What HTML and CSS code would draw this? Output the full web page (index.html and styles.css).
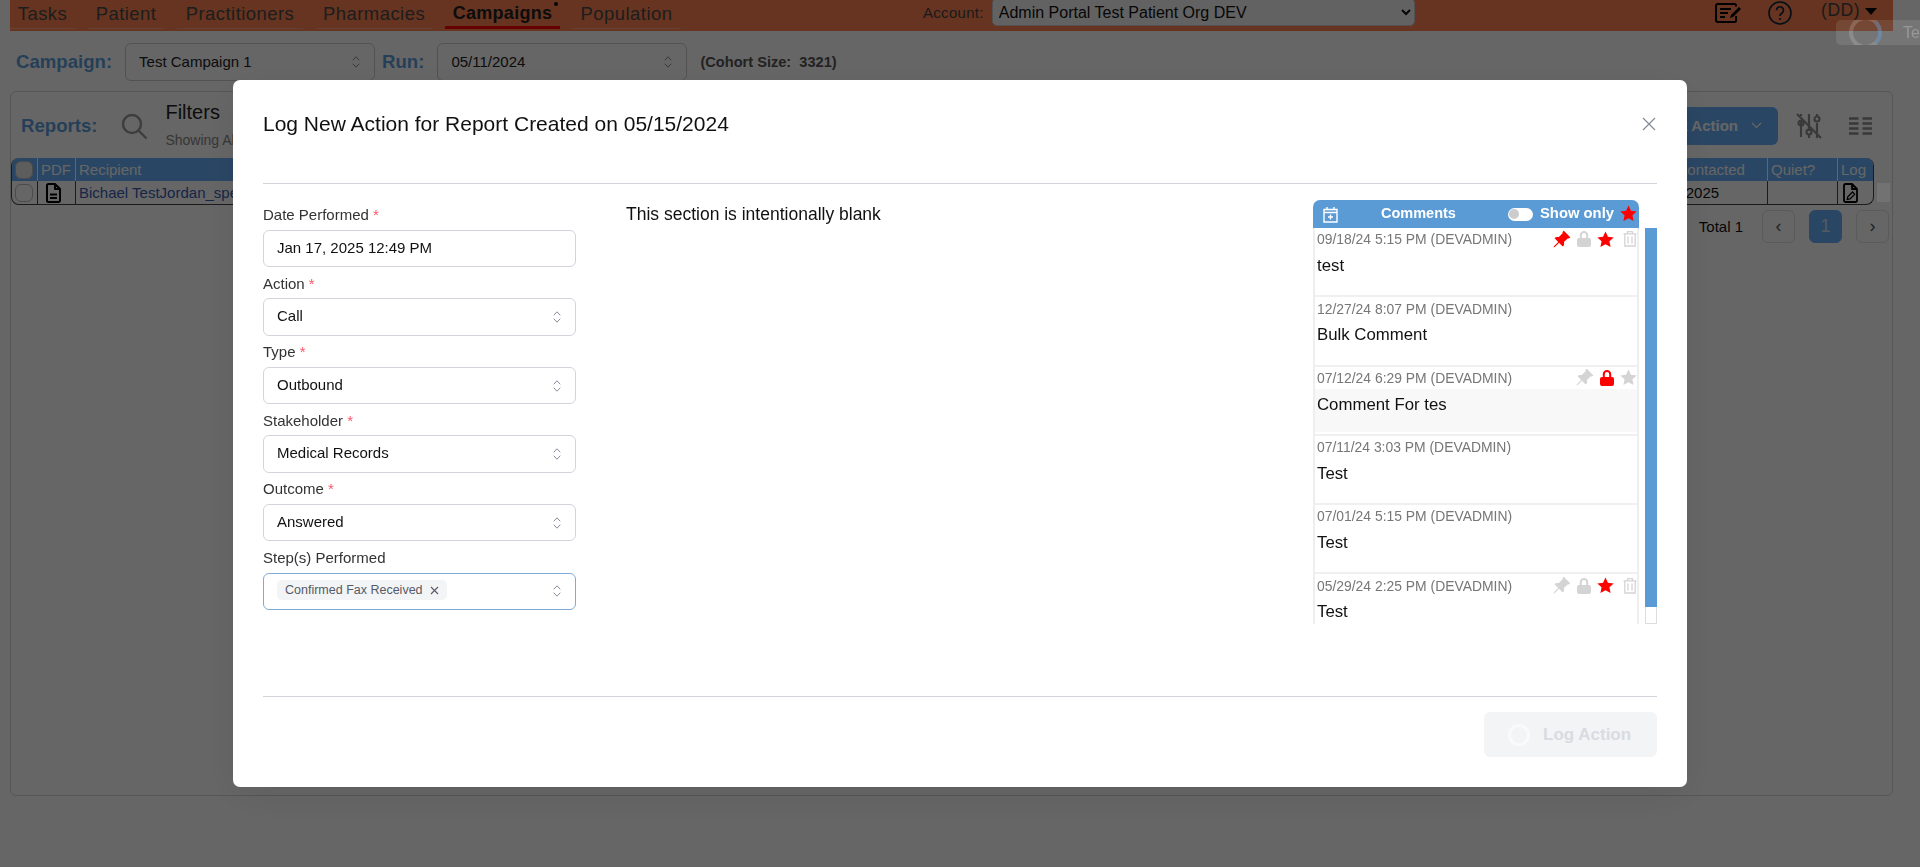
FILE: index.html
```html
<!DOCTYPE html>
<html lang="en">
<head>
<meta charset="utf-8">
<title>Log New Action</title>
<link rel="stylesheet" href="styles.css">
</head>
<body>
<svg class="defs" width="0" height="0" aria-hidden="true">
  <symbol id="i-pin" viewBox="0 0 16 16"><path d="M9.828.722a.5.5 0 0 1 .354.146l4.95 4.95a.5.5 0 0 1 0 .707c-.48.48-1.072.588-1.503.588-.177 0-.335-.018-.46-.039l-3.134 3.134a5.927 5.927 0 0 1 .16 1.013c.046.702-.032 1.687-.72 2.375a.5.5 0 0 1-.707 0l-2.829-2.828-3.182 3.182c-.195.195-1.219.902-1.414.707-.195-.195.512-1.22.707-1.414l3.182-3.182-2.828-2.829a.5.5 0 0 1 0-.707c.688-.688 1.673-.767 2.375-.72a5.922 5.922 0 0 1 1.013.16l3.134-3.133a2.772 2.772 0 0 1-.04-.461c0-.43.108-1.022.589-1.503a.5.5 0 0 1 .353-.146z" fill="currentColor"/></symbol>
  <symbol id="i-lock" viewBox="0 0 14 16"><path d="M7 0a4.200 4.200 0 0 0-4.200 4.200V7H2a2 2 0 0 0-2 2v5a2 2 0 0 0 2 2h10a2 2 0 0 0 2-2V9a2 2 0 0 0-2-2h-.8V4.200A4.200 4.200 0 0 0 7 0zm0 2a2.200 2.200 0 0 1 2.200 2.200V7H4.800V4.200A2.200 2.200 0 0 1 7 2z" fill="currentColor"/></symbol>
  <symbol id="i-star" viewBox="0 0 16 16"><path d="M8 .4l2.300 5 5.400.6-4 3.700 1.100 5.400L8 12.400l-4.800 2.700 1.100-5.400-4-3.700 5.400-.6z" fill="currentColor"/></symbol>
  <symbol id="i-trash" viewBox="0 0 14 16"><path d="M.5 2.800h13M4.500 2.800V1a.5.5 0 0 1 .5-.5h4a.5.5 0 0 1 .5.5v1.800M1.800 2.800v12.200h10.400V2.800M5 5.500v7M9 5.500v7" fill="none" stroke="currentColor" stroke-width="1.300"/></symbol>
  <symbol id="i-updown" viewBox="0 0 8 14"><path d="M1 5l3-3.200L7 5M1 9l3 3.200L7 9" fill="none" stroke="currentColor" stroke-width="1" stroke-linecap="round"/></symbol>
  <symbol id="i-doc" viewBox="0 0 15 20"><path d="M2.500 1h6.500l5 5v11.500a1.500 1.500 0 0 1-1.500 1.500h-10A1.500 1.500 0 0 1 1 17.500v-15A1.500 1.500 0 0 1 2.500 1zM9 1v5h5" fill="none" stroke="currentColor" stroke-width="2" stroke-linejoin="round"/><path d="M4 11.500h7M4 15h7" stroke="currentColor" stroke-width="1.800"/></symbol>
  <symbol id="i-log" viewBox="0 0 15 20"><path d="M2.500 1h6.500l5 5v11.500a1.500 1.500 0 0 1-1.500 1.500h-10A1.500 1.500 0 0 1 1 17.500v-15A1.500 1.500 0 0 1 2.500 1zM9 1v5h5" fill="none" stroke="currentColor" stroke-width="1.800" stroke-linejoin="round"/><path d="M4.200 16.500l.6-2.800 4.700-4.700 2.200 2.200-4.700 4.700z" fill="none" stroke="currentColor" stroke-width="1.300"/></symbol>
</svg>

<div class="page">
  <nav class="nav">
    <ul class="tabs">
      <li class="tab tab-1">Tasks</li>
      <li class="tab tab-2">Patient</li>
      <li class="tab tab-3">Practitioners</li>
      <li class="tab tab-4">Pharmacies</li>
      <li class="tab tab-5 tab-active">Campaigns<span class="dot"></span></li>
      <li class="tab tab-6">Population</li>
    </ul>
    <div class="account">
      <label class="account-label" for="acct">Account:</label>
      <select class="account-select" id="acct"><option>Admin Portal Test Patient Org DEV</option></select>
    </div>
    <div class="nav-right">
      <svg class="nav-edit" width="27" height="20" viewBox="0 0 27 20"><path d="M21 3.500V2.500A1.500 1.500 0 0 0 19.500 1H3A2 2 0 0 0 1 3v14a2 2 0 0 0 2 2h16.500a1.500 1.500 0 0 0 1.500-1.500V13" fill="none" stroke="currentColor" stroke-width="2"/><path d="M5 6h11M5 10h8M5 14h5" stroke="currentColor" stroke-width="2"/><path d="M15 15l1-3 8-8 2 2-8 8z" fill="currentColor"/></svg>
      <svg class="nav-help" width="24" height="24" viewBox="0 0 24 24"><circle cx="12" cy="12" r="11" fill="none" stroke="currentColor" stroke-width="1.600"/><path d="M8.500 9.300a3.500 3.500 0 1 1 5.300 3c-1.200.8-1.800 1.300-1.800 2.700" fill="none" stroke="currentColor" stroke-width="1.700"/><circle cx="12" cy="18" r="1.100" fill="currentColor"/></svg>
      <span class="user">(DD)</span>
      <span class="caret"></span>
    </div>
  </nav>

  <div class="subbar">
    <span class="sub-label lab-campaign">Campaign:</span>
    <div class="fake-select">Test Campaign 1<svg class="updown" width="8" height="14"><use href="#i-updown"/></svg></div>
    <span class="sub-label lab-run">Run:</span>
    <div class="fake-select">05/11/2024<svg class="updown" width="8" height="14"><use href="#i-updown"/></svg></div>
    <span class="cohort">(Cohort Size:&nbsp; 3321)</span>
  </div>

  <section class="panel">
    <div class="toolbar">
      <span class="sub-label reports">Reports:</span>
      <div class="search-box">
        <svg width="28" height="28" viewBox="0 0 28 28"><circle cx="12" cy="12" r="9" fill="none" stroke="currentColor" stroke-width="2.400"/><path d="M18.500 18.500l8 8" stroke="currentColor" stroke-width="2.400"/></svg>
      </div>
      <div class="filter-text">
        <div class="filter-title">Filters</div>
        <div class="filter-sub">Showing All Reports</div>
      </div>
      <div class="toolbar-right">
        <div class="action-btn">Bulk Action
          <svg width="11" height="7" viewBox="0 0 11 7"><path d="M1 1l4.500 4.500L10 1" fill="none" stroke="currentColor" stroke-width="1.200"/></svg>
        </div>
        <svg class="tool-sliders" width="26" height="26" viewBox="0 0 26 26"><g fill="none" stroke="currentColor" stroke-width="2.200"><path d="M5 8V24M5 1v2M13 1v17M13 22v3M21 10v15M21 1v3"/><circle cx="5" cy="10" r="2.500"/><circle cx="13" cy="19" r="2.500"/><circle cx="21" cy="6" r="2.500"/><path d="M1 1l24 24"/></g></svg>
        <svg class="tool-cols" width="23" height="18" viewBox="0 0 23 18"><path d="M0 1.500h9.500M13.500 1.500H23M0 6.500h9.500M13.500 6.500H23M0 11.500h9.500M13.500 11.500H23M0 16.500h9.500M13.500 16.500H23" stroke="currentColor" stroke-width="2.400"/></svg>
      </div>
    </div>

    <div class="table-wrap">
      <div class="table">
        <div class="thead">
          <div class="cell c-check"><span class="check check-head"></span></div>
          <div class="cell c-pdf">PDF</div>
          <div class="cell c-name">Recipient</div>
          <div class="cell c-last">Last Contacted</div>
          <div class="cell c-quiet">Quiet?</div>
          <div class="cell c-log">Log</div>
        </div>
        <div class="trow">
          <div class="cell c-check"><span class="check"></span></div>
          <div class="cell c-pdf icon-cell pdf-cell"><svg width="15" height="20"><use href="#i-doc"/></svg></div>
          <div class="cell c-name link">Bichael TestJordan_specialist</div>
          <div class="cell c-last">01/17/2025</div>
          <div class="cell c-quiet"></div>
          <div class="cell c-log icon-cell log-cell"><svg width="15" height="20"><use href="#i-log"/></svg></div>
        </div>
      </div>
      <div class="table-scroll"></div>
    </div>

    <div class="pager">
      <span class="total">Total 1</span>
      <span class="page-btn">&#8249;</span>
      <span class="page-btn page-current">1</span>
      <span class="page-btn">&#8250;</span>
    </div>
  </section>
</div>

<div class="overlay"></div>

<div class="ghost-toast"><span class="ghost-spin"></span><span class="ghost-text">Te</span></div>

<div class="modal" role="dialog">
  <header class="modal-head">
    <h2 class="modal-title">Log New Action for Report Created on 05/15/2024</h2>
    <svg class="close" width="14" height="14" viewBox="0 0 14 14"><path d="M1 1l12 12M13 1L1 13" stroke="currentColor" stroke-width="1.300"/></svg>
  </header>

  <div class="modal-body">
    <form class="form">
      <div class="field"><label class="label">Date Performed <b class="req">*</b></label><div class="control">Jan 17, 2025 12:49 PM</div></div>
      <div class="field"><label class="label">Action <b class="req">*</b></label><div class="control">Call<svg class="updown" width="8" height="14"><use href="#i-updown"/></svg></div></div>
      <div class="field"><label class="label">Type <b class="req">*</b></label><div class="control">Outbound<svg class="updown" width="8" height="14"><use href="#i-updown"/></svg></div></div>
      <div class="field"><label class="label">Stakeholder <b class="req">*</b></label><div class="control">Medical Records<svg class="updown" width="8" height="14"><use href="#i-updown"/></svg></div></div>
      <div class="field"><label class="label">Outcome <b class="req">*</b></label><div class="control">Answered<svg class="updown" width="8" height="14"><use href="#i-updown"/></svg></div></div>
      <div class="field"><label class="label">Step(s) Performed</label><div class="control control-focus"><span class="chip">Confirmed Fax Received<svg width="9" height="9" viewBox="0 0 9 9"><path d="M1 1l7 7M8 1L1 8" stroke="currentColor" stroke-width="1.100"/></svg></span><svg class="updown" width="8" height="14"><use href="#i-updown"/></svg></div></div>
    </form>

    <p class="blank">This section is intentionally blank</p>

    <aside class="comments">
      <div class="c-head">
        <svg class="c-cal" width="15" height="17" viewBox="0 0 15 17"><path d="M1 3.500h13v12.500H1zM1 6.500h13M4 1v3M11 1v3M7.500 8.500v5M5 11h5" fill="none" stroke="currentColor" stroke-width="1.400"/></svg>
        <span class="c-title">Comments</span>
        <span class="toggle"><span class="knob"></span></span>
        <span class="c-only">Show only</span>
        <svg class="c-star" width="17" height="17"><use href="#i-star"/></svg>
      </div>
      <div class="c-main">
        <div class="c-list">
          <article class="c-row">
            <div class="c-meta"><span class="c-date">09/18/24 5:15 PM (DEVADMIN)</span>
              <span class="c-icons"><svg class="on" width="19" height="19"><use href="#i-pin"/></svg><svg class="off" width="14" height="16"><use href="#i-lock"/></svg><svg class="on" width="17" height="17"><use href="#i-star"/></svg><svg class="off c-trash" width="14" height="16"><use href="#i-trash"/></svg></span></div>
            <div class="c-text">test</div>
          </article>
          <article class="c-row">
            <div class="c-meta"><span class="c-date">12/27/24 8:07 PM (DEVADMIN)</span></div>
            <div class="c-text">Bulk Comment</div>
          </article>
          <article class="c-row c-row-shade">
            <div class="c-meta"><span class="c-date">07/12/24 6:29 PM (DEVADMIN)</span>
              <span class="c-icons"><svg class="off" width="19" height="19"><use href="#i-pin"/></svg><svg class="on" width="14" height="16"><use href="#i-lock"/></svg><svg class="off" width="17" height="17"><use href="#i-star"/></svg></span></div>
            <div class="c-text">Comment For tes</div>
          </article>
          <article class="c-row">
            <div class="c-meta"><span class="c-date">07/11/24 3:03 PM (DEVADMIN)</span></div>
            <div class="c-text">Test</div>
          </article>
          <article class="c-row">
            <div class="c-meta"><span class="c-date">07/01/24 5:15 PM (DEVADMIN)</span></div>
            <div class="c-text">Test</div>
          </article>
          <article class="c-row">
            <div class="c-meta"><span class="c-date">05/29/24 2:25 PM (DEVADMIN)</span>
              <span class="c-icons"><svg class="off" width="19" height="19"><use href="#i-pin"/></svg><svg class="off" width="14" height="16"><use href="#i-lock"/></svg><svg class="on" width="17" height="17"><use href="#i-star"/></svg><svg class="off c-trash" width="14" height="16"><use href="#i-trash"/></svg></span></div>
            <div class="c-text">Test</div>
          </article>
        </div>
        <div class="c-scroll"><div class="c-thumb"></div></div>
      </div>
    </aside>
  </div>

  <footer class="modal-foot">
    <div class="log-btn"><span class="log-spin"></span>Log Action</div>
  </footer>
</div>
</body>
</html>
```
FILE: styles.css
```css
* { box-sizing: border-box; }
html, body { margin: 0; height: 100%; }
body {
  font-family: "Liberation Sans", Arial, sans-serif;
  background: #fff;
  overflow: hidden;
  color: #111;
}
.defs { position: absolute; }

.page { padding: 0 27px 0 10px; height: 867px; display: flex; flex-direction: column; }

/* top nav */
.nav {
  height: 31px;
  background: #ff8350;
  display: flex;
  align-items: flex-start;
  flex: none;
}
.tabs { list-style: none; margin: 0; padding: 0; display: flex; gap: 12.5px; width: 913px; flex: none; }
.tab {
  position: relative;
  height: 29px;
  padding-top: 3px;
  font-size: 18.5px;
  line-height: 21px;
  letter-spacing: .45px;
  text-align: center;
  color: #4a4a4a;
  border-bottom: 1px solid #ffa27c;
}
.tab-1 { width: 65px; }
.tab-2 { width: 77px; }
.tab-3 { width: 126px; }
.tab-4 { width: 117px; }
.tab-5 { width: 115px; }
.tab-6 { width: 108px; }
.tab-active { font-size: 18px; font-weight: 700; color: #222; letter-spacing: .3px; border-bottom: 3px solid #f00; }
.dot { position: absolute; right: 2px; top: 2px; width: 4px; height: 4px; border-radius: 50%; background: #111; }
.account { display: flex; align-items: center; gap: 8px; margin-top: -2px; }
.account-label { font-size: 15px; letter-spacing: .3px; color: #444; }
.account-select {
  width: 423px;
  height: 28px;
  font: 16px "Liberation Sans", Arial, sans-serif;
  padding: 0 2px;
  border: 1px solid #ccc;
  border-radius: 5px;
  background: #f4f4f4;
  color: #111;
}
.nav-right { margin-left: auto; display: flex; align-items: flex-start; color: #111; padding-right: 16px; }
.nav-edit { margin-top: 3px; color: #000; }
.nav-help { margin: 1px 0 0 26px; color: #0a2540; }
.user { margin-left: 29px; font-size: 17.500px; letter-spacing: .5px; line-height: 20px; color: #444; }
.caret { margin: 8px 0 0 5px; border: 6px solid transparent; border-top: 7px solid #000; border-bottom: 0; }

/* campaign bar */
.subbar { display: flex; align-items: center; height: 60px; flex: none; padding-top: 1px; }
.sub-label { font-size: 18.600px; font-weight: 700; color: #5f9fdd; }
.lab-campaign { margin: 0 13px 0 6px; }
.lab-run { margin: 0 13px 0 0; }
.fake-select {
  position: relative;
  width: 250px;
  height: 38px;
  border: 1px solid #c9ccd3;
  border-radius: 6px;
  background: #fff;
  font-size: 15px;
  line-height: 35px;
  padding-left: 13px;
  color: #222;
  margin-right: 7px;
}
.cohort { font-size: 14.600px; font-weight: 700; color: #555; margin-left: 6px; }
.updown { position: absolute; right: 14px; top: 50%; margin-top: -7px; color: #868c99; }

/* reports panel */
.panel {
  height: 705px;
  border: 1px solid #d4d6da;
  border-radius: 6px;
  padding: 0;
  display: flex;
  flex-direction: column;
  flex: none;
}
.toolbar { display: flex; align-items: center; height: 66px; flex: none; padding-top: 1px; }
.reports { margin: 0 12px 0 10px; }
.search-box { width: 50px; height: 50px; background: #fff; display: flex; align-items: center; justify-content: center; color: #999; border-radius: 4px; }
.filter-text { margin: -2px 0 0 6px; }
.filter-title { font-size: 20px; line-height: 24px; color: #222; }
.filter-sub { font-size: 14px; line-height: 20px; margin-top: 6px; color: #888; }
.toolbar-right { margin-left: auto; display: flex; align-items: center; padding-right: 20px; }
.action-btn {
  height: 38px; padding: 0 16px; border-radius: 6px;
  background: #68b0fa; color: #fff; display: flex; align-items: center; gap: 13px;
  font-size: 15px; font-weight: 700; width: 170px; justify-content: flex-end;
}
.tool-sliders { margin-left: 18px; color: #909090; }
.tool-cols { margin-left: 27px; color: #909090; }

.table-wrap { display: flex; align-items: center; padding: 0 2px 0 0; flex: none; }
.table { width: 1863px; border: 1px solid #444; border-top: 0; border-radius: 8px; overflow: hidden; flex: none; }
.thead, .trow { display: flex; font-size: 15px; }
.thead { background: #68b0fa; color: #fff; height: 23px; }
.trow { height: 23px; }
.cell { padding: 0 3px; line-height: 23px; border-left: 1px solid #444; white-space: nowrap; overflow: hidden; }
.thead .cell { border-left-color: #fff; }
.cell:first-child { border-left: 0; }
.c-check { width: 25px; padding: 0 4px 0 2px; display: flex; align-items: center; justify-content: center; }
.c-pdf { width: 38px; }
.c-name { flex: 1; }
.c-last { width: 127px; }
.c-quiet { width: 70px; }
.c-log { width: 36px; }
.link { color: #3a5db5; }
.icon-cell { display: flex; align-items: center; color: #000; }
.pdf-cell { padding-left: 8px; }
.log-cell { padding-left: 5px; }
.check { width: 18px; height: 18px; border-radius: 6px; border: 1px solid #bbb; flex: none; }
.check-head { background: #e8e8e8; }
.table-scroll { position: relative; z-index: 2; width: 13px; height: 19px; margin: 22px 0 0 3px; background: rgba(255,255,255,.08); }

.pager { display: flex; align-items: center; justify-content: flex-end; padding: 5px 3px 0 0; }
.total { font-size: 15px; margin-right: 19px; color: #111; }
.page-btn { width: 33px; height: 33px; border: 1px solid #dfe1e4; border-radius: 6px; display: flex; align-items: center; justify-content: center; font-size: 18px; color: #555; margin-right: 14px; }
.page-btn:last-child { margin-right: 0; }
.page-current { background: #68b0fa; border-color: #68b0fa; color: #cfe2f7; }

/* disabled loading toast that floats above the backdrop */
.ghost-toast {
  position: absolute; z-index: 2; left: 1836px; top: 20px; width: 84px; height: 25px;
  background: rgba(255,255,255,.1); border-radius: 5px 0 0 5px;
  overflow: hidden;
}
.ghost-spin { position: absolute; left: 13px; top: -4px; width: 33px; height: 33px; border-radius: 50%; border: 4px solid rgba(255,255,255,.16); border-right-color: rgba(110,165,225,.4); }
.ghost-text { position: absolute; left: 67px; top: 3px; font-size: 16px; line-height: 19px; color: rgba(255,255,255,.25); }

.overlay { position: fixed; z-index: 1; inset: 0; background: rgba(0,0,0,.6); }

/* modal */
.modal {
  position: fixed;
  z-index: 3;
  left: 233px;
  top: 80px;
  width: 1454px;
  height: 707px;
  background: #fff;
  border-radius: 7px;
  box-shadow: 0 10px 40px rgba(0,0,0,.08);
  padding: 0 30px;
  display: flex;
  flex-direction: column;
}
.modal-head { height: 104px; flex: none; border-bottom: 1px solid #d1d5db; position: relative; padding-top: 31px; }
.modal-title { margin: 0; font-size: 21px; line-height: 26px; font-weight: 400; color: #111; }
.close { position: absolute; right: 1px; top: 37px; color: #888e99; }
.modal-body { flex: 1; display: flex; align-items: flex-start; padding-top: 15px; min-height: 0; }

.form { width: 313px; flex: none; }
.field { height: 68.6px; }
.label { display: block; height: 30.600px; line-height: 31px; font-size: 15px; color: #333; }
.req { font-weight: 400; color: #f56; }
.control {
  position: relative;
  height: 37.5px;
  border: 1px solid #d1d5db;
  border-radius: 6px;
  font-size: 15px;
  line-height: 34.500px;
  padding-left: 13px;
  color: #111;
}
.control-focus { border-color: #7fa9d6; display: flex; align-items: center; padding-bottom: 2px; }
.chip {
  display: inline-flex; align-items: center; gap: 7px; height: 20px;
  padding: 0 8px; border-radius: 5px; background: #f3f4f6;
  font-size: 12.500px; color: #555a66; line-height: 20px;
}
.blank { margin: 0 0 0 50px; font-size: 17.500px; line-height: 31px; color: #111; flex: 1; }

.comments { width: 344px; flex: none; margin-top: 1px; }
.c-head {
  width: 326px; height: 28px; background: #5b9bd5; color: #fff;
  border-radius: 7px 7px 0 0; display: flex; align-items: center;
  font-weight: 700;
  white-space: nowrap;
}
.c-cal { margin-left: 10px; flex: none; }
.c-title { margin: 0 0 2px 43px; font-size: 14.5px; width: 127px; flex: none; }
.toggle { width: 25px; height: 13px; background: #fff; border-radius: 7px; position: relative; flex: none; }
.knob { position: absolute; left: 1px; top: 1.500px; width: 10px; height: 10px; border-radius: 50%; background: #ccc; }
.c-only { margin: 0 0 2px 7px; font-size: 14.800px; flex: none; }
.c-star { margin: 0 0 1px 6px; color: #f00; flex: none; }
.c-main { display: flex; height: 396px; gap: 6px; overflow: hidden; }
.c-list { width: 326px; border-left: 2px solid #eee; border-right: 2px solid #eee; flex: none; overflow: hidden; }
.c-row { height: 69.300px; border-bottom: 2px solid #f0f0f0; }
.c-row-shade .c-text { background: #f8f8f8; height: 43px; }
.c-meta { height: 22.500px; display: flex; align-items: center; padding-left: 2px; }
.c-date { font-size: 13.9px; color: #777; }
.c-icons { margin-left: auto; display: flex; align-items: center; gap: 6px; }
.c-icons svg { flex: none; }
.c-icons .on { color: #f00; }
.c-icons .off { color: #d4d4d4; }
.c-icons .c-trash { margin-left: 3px; }
.c-text { font-size: 16.800px; line-height: 26px; padding: 2.500px 0 0 2px; color: #111; }
.c-scroll { width: 12px; border: 1px solid #ddd; border-top: 0; flex: none; }
.c-thumb { height: 379px; margin: 0 -1px; background: #5b9bd5; }

.modal-foot { height: 91px; flex: none; border-top: 1px solid #d1d5db; display: flex; justify-content: flex-end; padding-top: 15px; }
.log-btn {
  width: 173px; height: 45px; background: #f3f4f6; border-radius: 6px;
  display: flex; align-items: center; padding-left: 24px; gap: 13px;
  font-size: 17px; font-weight: 700; color: #d9dbe1;
}
.log-spin { width: 22px; height: 22px; border-radius: 50%; border: 3px solid #fafafa; }
```
